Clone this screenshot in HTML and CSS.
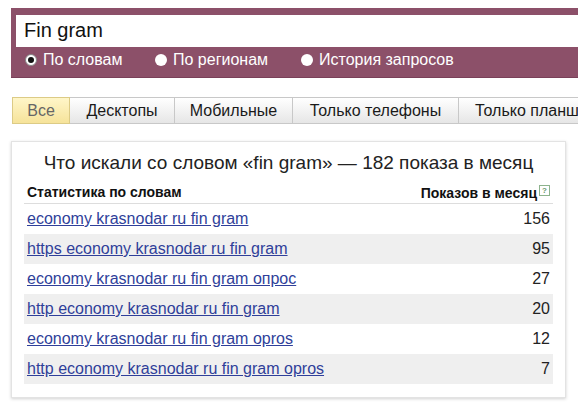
FILE: index.html
```html
<!DOCTYPE html>
<html>
<head>
<meta charset="utf-8">
<link rel="stylesheet" href="styles.css">
</head>
<body>
<div class="page">
  <div class="search">
    <div class="input">Fin gram</div>
    <div class="radios">
      <span class="radio on"><span class="dot"></span>По словам</span>
      <span class="radio"><span class="dot"></span>По регионам</span>
      <span class="radio"><span class="dot"></span>История запросов</span>
    </div>
  </div>
  <div class="tabs">
    <span class="tab active">Все</span>
    <span class="tab t2">Десктопы</span>
    <span class="tab t3">Мобильные</span>
    <span class="tab t4">Только телефоны</span>
    <span class="tab t5">Только планшеты</span>
  </div>
  <div class="card">
    <div class="title">Что искали со словом «fin gram» — 182 показа в месяц</div>
    <div class="thead">
      <span>Статистика по словам</span>
      <span class="right">Показов в месяц<span class="help">?</span></span>
    </div>
    <div class="row"><a href="#">economy krasnodar ru fin gram</a><span>156</span></div>
    <div class="row alt"><a href="#">https economy krasnodar ru fin gram</a><span>95</span></div>
    <div class="row"><a href="#">economy krasnodar ru fin gram опрос</a><span>27</span></div>
    <div class="row alt"><a href="#">http economy krasnodar ru fin gram</a><span>20</span></div>
    <div class="row"><a href="#">economy krasnodar ru fin gram opros</a><span>12</span></div>
    <div class="row alt"><a href="#">http economy krasnodar ru fin gram opros</a><span>7</span></div>
  </div>
</div>
</body>
</html>
```
FILE: styles.css
```css
html, body {
  margin: 0;
  padding: 0;
  background: #fff;
  overflow: hidden;
}
body {
  font-family: "Liberation Sans", Arial, sans-serif;
  width: 578px;
  height: 405px;
}
.page {
  padding: 8px 0 0 11px;
}
.search {
  background: #8c5069;
  padding: 7px 0 6px 5px;
  height: 56px;
  border-bottom: 1px solid #7a4059;
}
.input {
  background: #fff;
  height: 32px;
  line-height: 31px;
  font-size: 20px;
  color: #111;
  padding-left: 8px;
}
.radios {
  display: flex;
  height: 25px;
  align-items: center;
  padding-left: 9px;
  color: #fff;
  font-size: 16px;
}
.radio {
  display: flex;
  align-items: center;
}
.radio:nth-child(1) { width: 130px; }
.radio:nth-child(2) { width: 146px; }
.dot {
  width: 12px;
  height: 12px;
  border-radius: 50%;
  background: #fff;
  box-sizing: border-box;
  margin-right: 6px;
  position: relative;
}
.radio.on .dot {
  border: 1px solid #888;
}
.radio.on .dot::after {
  content: "";
  position: absolute;
  left: 2px;
  top: 2px;
  width: 6px;
  height: 6px;
  border-radius: 50%;
  background: #111;
}
.tabs {
  display: flex;
  margin-top: 19px;
  margin-left: 1px;
  height: 27px;
  white-space: nowrap;
  overflow: hidden;
}
.tab {
  box-sizing: border-box;
  height: 27px;
  line-height: 25px;
  font-size: 16px;
  color: #1a1a1a;
  border: 1px solid #c8c8c8;
  border-left: none;
  background: linear-gradient(#ffffff, #e6e6e6);
  text-align: center;
  flex: none;
}
.tab.active {
  border-left: 1px solid #d9c98a;
  border-color: #dccb86;
  background: linear-gradient(#fff6c9, #f6e39a);
  color: #666;
  width: 58px;
}
.t2 { width: 105px; }
.t3 { width: 118px; }
.t4 { width: 166px; }
.t5 { width: 130px; text-align: left; padding-left: 16px; }
.card {
  margin-top: 17px;
  width: 555px;
  height: 257px;
  box-sizing: border-box;
  border: 1px solid #e3e3e3;
  box-shadow: 0 1px 3px rgba(0,0,0,0.18);
  padding: 0 12px 0 12px;
}
.title {
  text-align: center;
  font-size: 19px;
  color: #222;
  padding-top: 10px;
  height: 32px;
  line-height: 22px;
  box-sizing: border-box;
}
.thead {
  display: flex;
  justify-content: space-between;
  font-size: 14px;
  font-weight: bold;
  color: #111;
  height: 30px;
  line-height: 17px;
  padding: 10px 3px 0 3px;
  box-sizing: border-box;
  border-bottom: 1px solid #ddd;
}
.right {
  display: flex;
  align-items: center;
}
.help {
  display: inline-block;
  width: 9px;
  height: 9px;
  border: 1px solid #8db38d;
  font-size: 8px;
  line-height: 9px;
  text-align: center;
  color: #6a9a6a;
  margin-left: 2px;
  margin-top: -6px;
  font-weight: bold;
}
.row {
  display: flex;
  justify-content: space-between;
  height: 30px;
  line-height: 30px;
  font-size: 16px;
  padding: 0 3px 0 3px;
  color: #222;
}
.row.alt {
  background: #efefef;
}
.row a {
  color: #2f3f9a;
  text-decoration: underline;
}
```
